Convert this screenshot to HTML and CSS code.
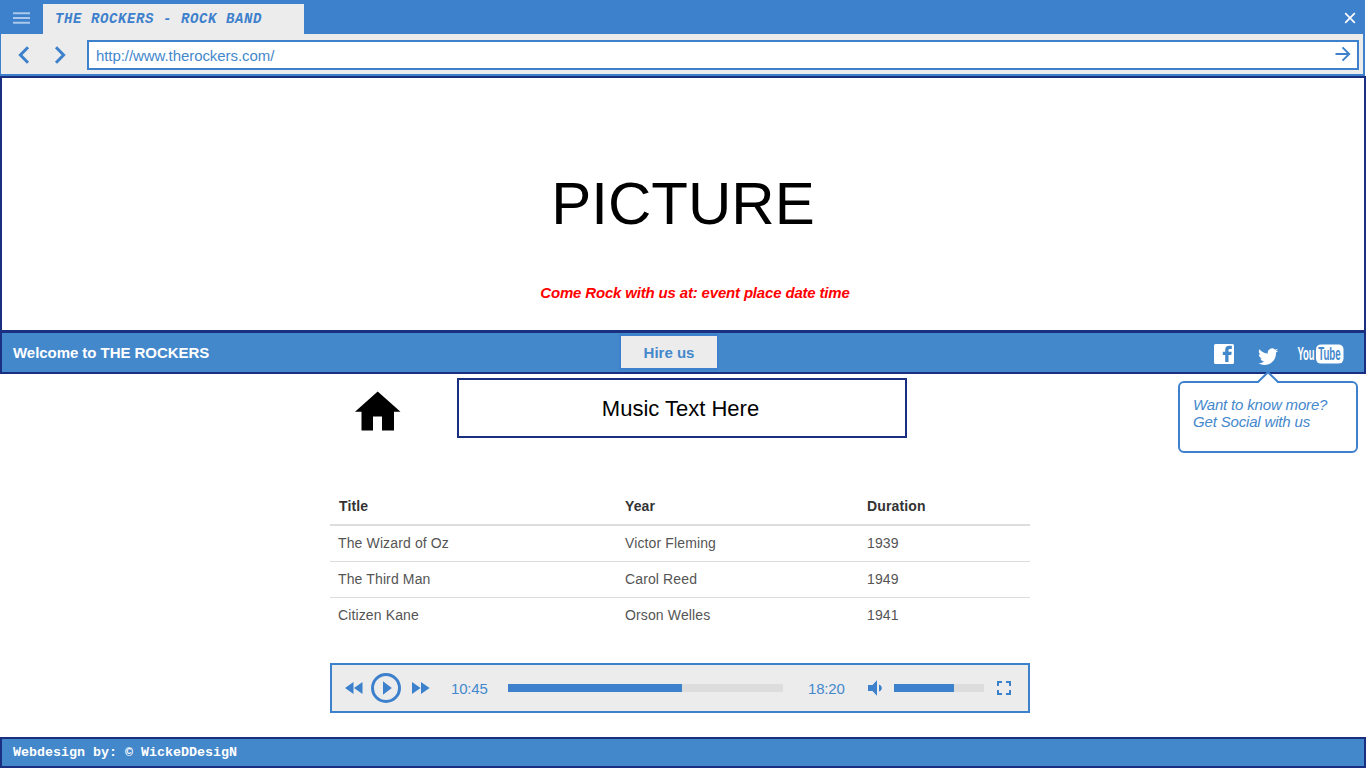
FILE: index.html
```html
<!DOCTYPE html>
<html lang="en">
<head>
<meta charset="utf-8">
<title>THE ROCKERS - ROCK BAND</title>
<link rel="stylesheet" href="styles.css">
</head>
<body>
<div class="page">
  <header class="browser">
    <div class="tabs">
      <svg class="menu" width="17" height="12" viewBox="0 0 17 12"><path d="M0 1.200h17M0 6h17M0 10.800h17" stroke="#a9c8ea" stroke-width="1.900"/></svg>
      <div class="tab">THE ROCKERS - ROCK BAND</div>
      <svg class="close" width="12" height="12" viewBox="0 0 12 12"><path d="M1.2 1.2l9.6 9.6M10.8 1.2l-9.6 9.6" stroke="#fff" stroke-width="1.700"/></svg>
    </div>
    <div class="toolbar">
      <svg class="back" width="12" height="18" viewBox="0 0 12 18"><path d="M10 1.3L2.4 9l7.600 7.700" fill="none" stroke="#3d80cc" stroke-width="3"/></svg>
      <svg class="forward" width="12" height="18" viewBox="0 0 12 18"><path d="M2 1.3L9.600 9 2 16.700" fill="none" stroke="#3d80cc" stroke-width="3"/></svg>
      <div class="address">
        <span>http://www.therockers.com/</span>
        <svg width="16" height="16" viewBox="0 0 16 16"><path d="M.5 8H14M7.500 1.300L14.200 8l-6.700 6.700" fill="none" stroke="#3d80cc" stroke-width="1.900"/></svg>
      </div>
    </div>
  </header>

  <section class="hero">
    <h1 class="hero-title">PICTURE</h1>
    <p class="hero-event">Come Rock with us at: event place date time</p>
  </section>

  <nav class="welcome-bar">
    <span class="welcome">Welcome to THE ROCKERS</span>
    <button class="hire">Hire us</button>
    <div class="social">
      <svg class="facebook" width="20" height="20" viewBox="0 0 20 20"><rect width="20" height="20" rx="1.500" fill="#fff"/><path d="M11.200 18v-7H8.800V7.700h2.400V5.800c0-2.700 1.500-4 3.900-4h2.700v3.100h-1.700c-1.300 0-1.600.5-1.600 1.500v1.300h3.200l-.4 3.300h-2.800v7z" fill="#4488cc"/></svg>
      <svg class="twitter" width="22" height="18" viewBox="0 0 22 18"><path d="M21.200 2.400c-.8.300-1.600.6-2.400.7.900-.5 1.500-1.300 1.800-2.300-.8.500-1.700.8-2.600 1A4.150 4.150 0 0 0 10.900 5.600C7.500 5.400 4.400 3.800 2.400 1.300 1.300 3.200 1.900 5.600 3.700 6.800 3 6.800 2.400 6.600 1.800 6.300c0 2 1.400 3.700 3.300 4.100-.6.200-1.200.2-1.800.1.500 1.600 2 2.800 3.800 2.900-1.700 1.300-3.900 2-6.100 1.700 8.500 5.100 18.300-.7 18-10.600.9-.6 1.600-1.300 2.200-2.100z" fill="#fff"/></svg>
      <svg class="youtube" width="47" height="20" viewBox="0 0 47 20"><rect x="19" y=".4" width="27.500" height="19.200" rx="5" fill="#fff"/><g class="yt"><text transform="translate(.5 16.300) scale(.54 1)" fill="#fff">You</text><text transform="translate(21.200 16.300) scale(.555 1)" fill="#4488cc">Tube</text></g></svg>
      <div class="callout">
        <svg class="pointer" width="24" height="12" viewBox="0 0 24 12"><path d="M2 12L12 1.500 22 12z" fill="#fff"/><path d="M.5 11H2L12 1.200 22 11h1.500" fill="none" stroke="#3d80cc" stroke-width="2"/></svg>
        Want to know more?<br>Get Social with us
      </div>
    </div>
  </nav>

  <main class="content">
    <div class="heading">
      <svg class="home" width="46" height="40" viewBox="0 0 46 40"><path d="M0 20.800L22.700.5 45.500 20.800H39V39.500H27V25.500h-9v14H6.500V20.800z"/></svg>
      <div class="music">Music Text Here</div>
    </div>
    <table class="tracks">
      <colgroup><col class="c1"><col class="c2"><col></colgroup>
      <thead><tr><th>Title</th><th>Year</th><th>Duration</th></tr></thead>
      <tbody>
        <tr><td>The Wizard of Oz</td><td>Victor Fleming</td><td>1939</td></tr>
        <tr><td>The Third Man</td><td>Carol Reed</td><td>1949</td></tr>
        <tr><td>Citizen Kane</td><td>Orson Welles</td><td>1941</td></tr>
      </tbody>
    </table>
    <div class="player">
      <svg class="rewind" width="18" height="12" viewBox="0 0 18 12"><path d="M8.500 0v12L0 6zM17.500 0v12L9 6z"/></svg>
      <svg class="play" width="30" height="30" viewBox="0 0 30 30"><circle cx="15" cy="15" r="13.500" fill="none" stroke="#3d80cc" stroke-width="3"/><path d="M12 8.300v13.400l8.800-6.700z"/></svg>
      <svg class="ffwd" width="18" height="12" viewBox="0 0 18 12"><path d="M0 0v12l8.600-6zM9 0v12l8.600-6z"/></svg>
      <span class="elapsed">10:45</span>
      <div class="bar progress"><div class="fill" style="width:174px"></div></div>
      <span class="total">18:20</span>
      <svg class="volume" width="15" height="16" viewBox="0 0 15 16"><path d="M0 5h4.500L9 .200v15.600L4.500 11H0zM11 4.400c2 .8 2.800 2.100 2.800 3.600s-.8 2.800-2.800 3.600z"/></svg>
      <div class="bar level"><div class="fill" style="width:60px"></div></div>
      <svg class="full" width="14" height="14" viewBox="0 0 14 14"><path d="M1 5V1h4M9 1h4v4M13 9v4H9M5 13H1V9" fill="none" stroke="#3d80cc" stroke-width="2"/></svg>
    </div>
  </main>

  <footer class="footer">Webdesign by: © WickeDDesigN</footer>
</div>
</body>
</html>
```
FILE: styles.css
```css
* { box-sizing: border-box; }
body { margin: 0; background: #fff; font-family: "Liberation Sans", Arial, sans-serif; font-size: 15px; overflow: hidden; }
svg { display: block; flex: none; overflow: visible; }
.page { width: 1366px; height: 768px; display: flex; flex-direction: column; }

.browser { width: 1365px; height: 76px; background: #3d80cc; }
.tabs { height: 34px; display: flex; }
.menu { margin: 12px 13px 0 13px; }
.tab { width: 261px; margin: 4px 0 0; padding-left: 12px; height: 30px; background: #ececec; color: #3d80cc; font: italic bold 14px/31px "Liberation Mono", monospace; letter-spacing: .6px; white-space: nowrap; }
.close { margin: 12px 9px 0 auto; }
.toolbar { height: 40px; margin: 0 2px 0 1px; background: #ececec; display: flex; align-items: flex-start; }
.back { margin: 12px 0 0 17px; }
.forward { margin: 12px 0 0 24px; }
.address { width: 1272px; height: 30px; margin: 6px 0 0 21px; padding: 0 6px 0 7px; border: 2px solid #3d80cc; background: #fff; color: #4488cc; display: flex; align-items: center; justify-content: space-between; }
.address span { padding-top: 1px; letter-spacing: -.07px; }
.address svg { margin-top: -2px; }

.hero { height: 254px; border: 2px solid #1b2f80; border-bottom: 0; text-align: center; }
.hero-title { margin: 91px 0 0; font-size: 60px; line-height: 70px; font-weight: normal; color: #000; }
.hero-event { margin: 45px 0 0; padding-left: 24px; line-height: 17px; font-weight: bold; font-style: italic; letter-spacing: -.17px; color: #f00; }

.welcome-bar { height: 44px; background: #4488cc; border: 2px solid #1b2f80; border-top-width: 3px; display: grid; grid-template-columns: 617px 100px 1fr; align-items: start; }
.welcome { padding: 11px 0 0 11px; line-height: 17px; font-weight: bold; letter-spacing: -.05px; color: #fff; }
.hire { width: 100px; height: 36px; margin-top: 1px; padding: 0; border: 2px solid #3d80cc; background: #ececec; color: #4488cc; font: bold 15px "Liberation Sans", Arial, sans-serif; }
.social { position: relative; display: flex; justify-content: flex-end; padding: 11px 20px 0 0; }
.twitter { margin: 4px 18px 0 23px; }
.yt { font: bold 17.500px "Liberation Sans", Arial, sans-serif; }
.callout { position: absolute; right: 6px; top: 48px; width: 180px; height: 72px; border: 2px solid #3d80cc; border-radius: 6px; background: #fff; padding: 13px; font-style: italic; line-height: 17px; letter-spacing: -.17px; color: #4488cc; }
.pointer { position: absolute; left: 76px; top: -12px; }

.content { width: 700px; margin: 0 0 0 330px; flex: 1; }
.heading { display: flex; padding-top: 4px; }
.home { margin: 13px 56px 0 25px; }
.music { width: 450px; height: 60px; border: 2px solid #1b2f80; text-align: center; font-size: 22px; line-height: 57px; padding-right: 3px; color: #000; }
.tracks { width: 700px; margin-top: 50px; table-layout: fixed; border-collapse: collapse; font-size: 14px; letter-spacing: .13px; color: #555; }
.c1 { width: 287px; }
.c2 { width: 242px; }
.tracks th { height: 37px; padding: 0 8px; text-align: left; color: #333; border-bottom: 2px solid #ddd; }
.tracks th:first-child { padding-left: 9px; }
.tracks td { height: 36px; padding: 0 8px; border-bottom: 1px solid #ddd; }
.tracks tr:last-child td { border-bottom: 0; }
.player { width: 700px; height: 50px; margin-top: 30px; border: 2px solid #3d80cc; background: #ececec; display: flex; align-items: center; color: #4488cc; fill: #3d80cc; }
.rewind { margin-left: 13px; }
.play { margin: 0 11px 0 8px; }
.elapsed, .total { padding-top: 1px; width: 38px; letter-spacing: -.2px; }
.elapsed { margin: 0 19px 0 21px; }
.bar { height: 8px; background: #ddd; }
.fill { height: 8px; background: #3d80cc; }
.progress { width: 275px; }
.total { margin: 0 22px 0 25px; }
.level { width: 90px; margin: 0 13px 0 11px; }
.footer { height: 31px; background: #4488cc; border: 2px solid #1b2f80; padding-left: 11px; color: #fff; font: bold 13.330px/28px "Liberation Mono", monospace; }
```
